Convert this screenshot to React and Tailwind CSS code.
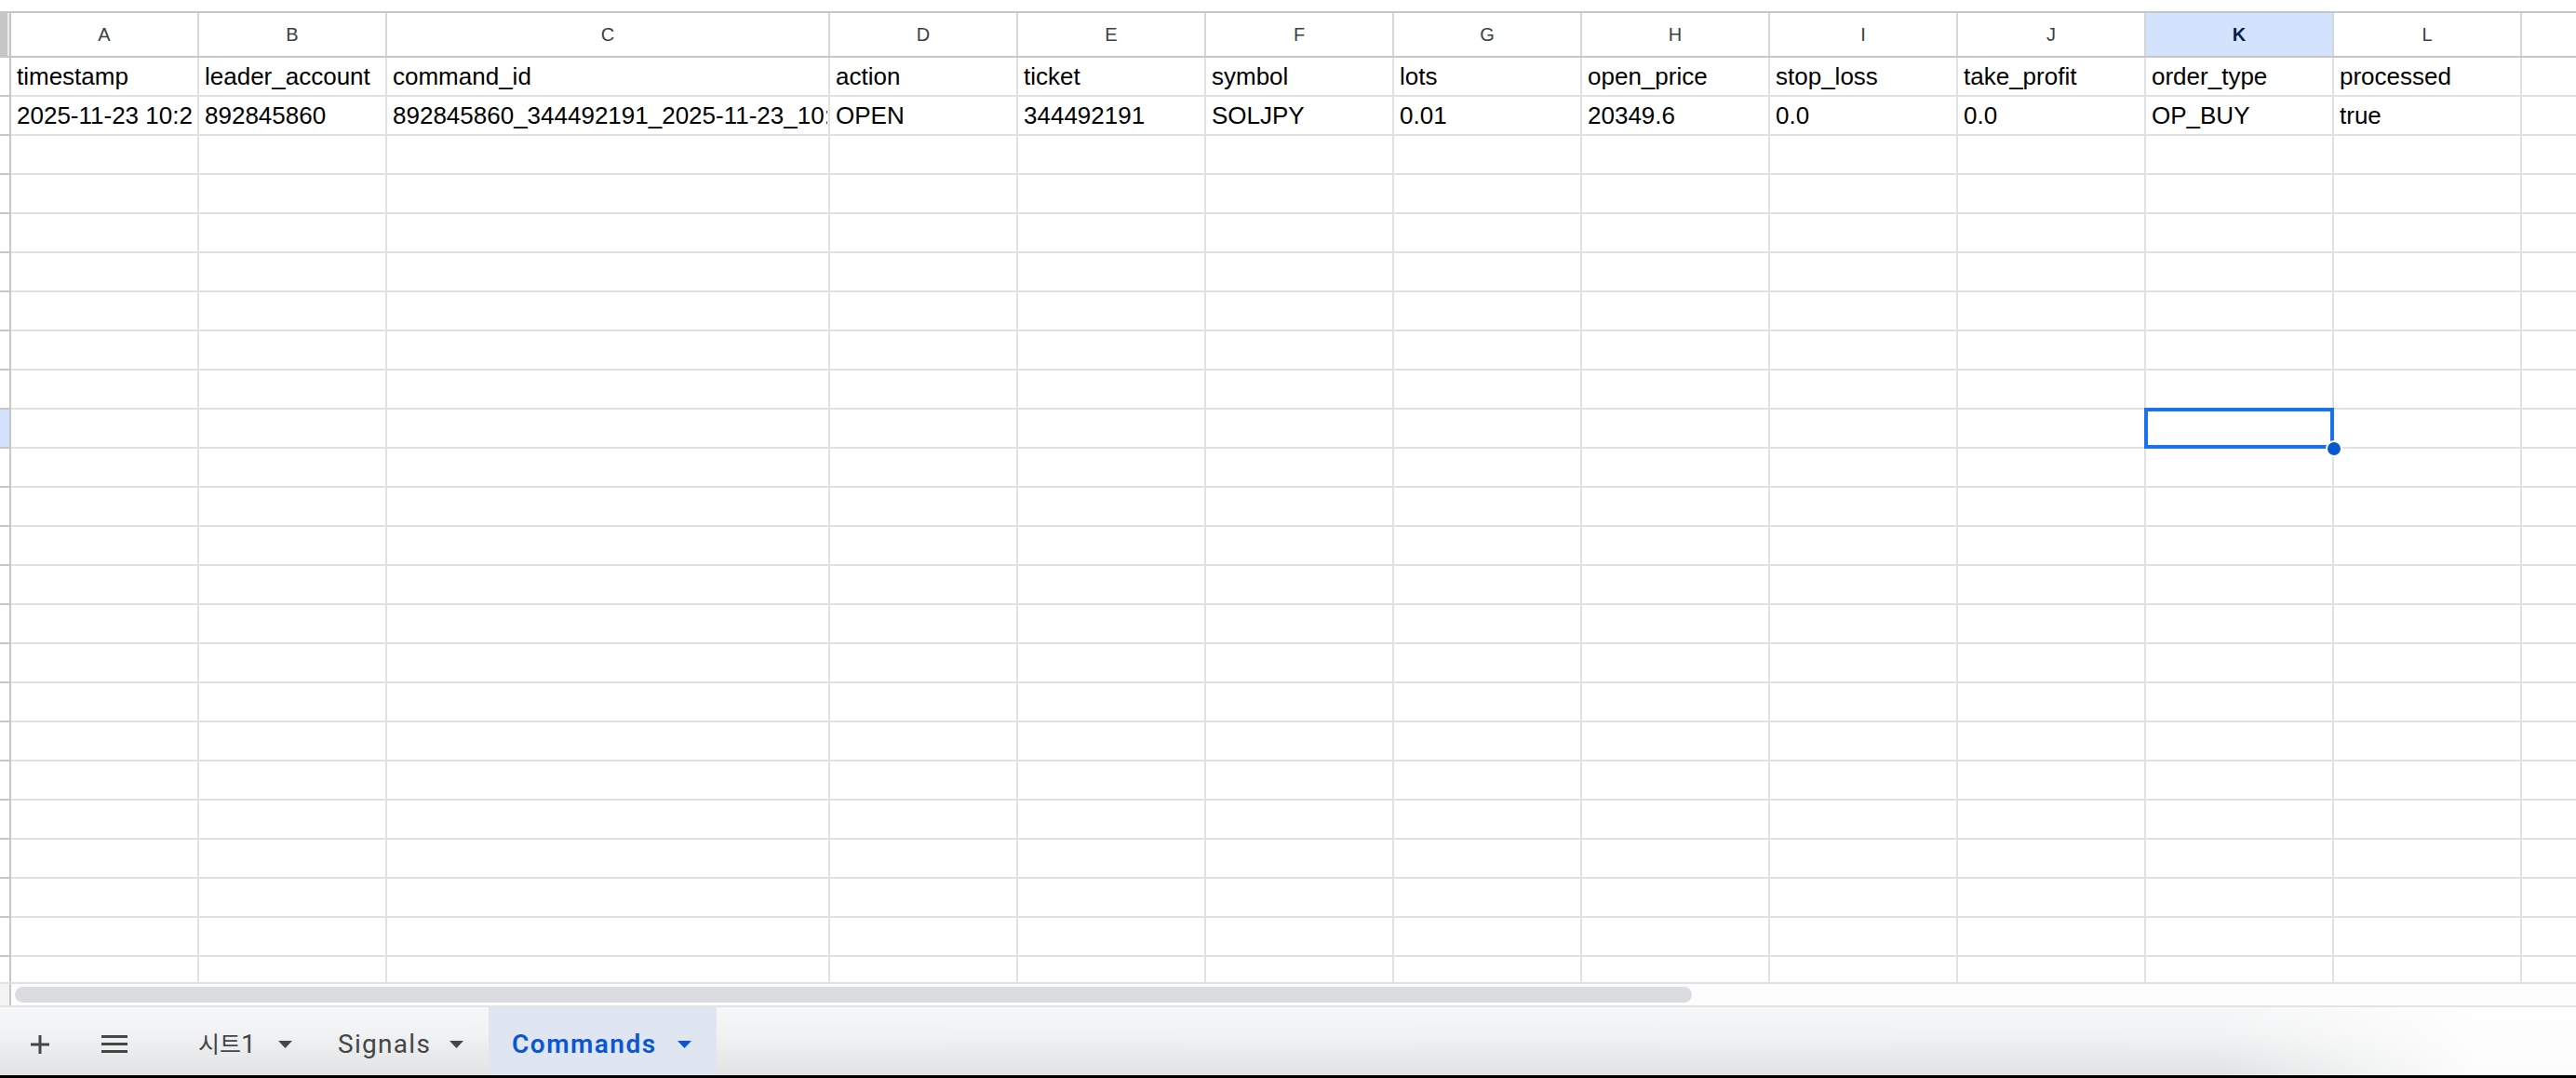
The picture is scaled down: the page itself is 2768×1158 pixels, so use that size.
import React from "react";

const COLS = [
  { k: "A", w: "w-[202px]" },
  { k: "B", w: "w-[202px]" },
  { k: "C", w: "w-[476px]" },
  { k: "D", w: "w-[202px]" },
  { k: "E", w: "w-[202px]" },
  { k: "F", w: "w-[202px]" },
  { k: "G", w: "w-[202px]" },
  { k: "H", w: "w-[202px]" },
  { k: "I", w: "w-[202px]" },
  { k: "J", w: "w-[202px]" },
  { k: "K", w: "w-[202px]" },
  { k: "L", w: "w-[202px]" },
  { k: "M", w: "w-[202px]" },
];

const DATA = [
  [
    "timestamp",
    "leader_account",
    "command_id",
    "action",
    "ticket",
    "symbol",
    "lots",
    "open_price",
    "stop_loss",
    "take_profit",
    "order_type",
    "processed",
    "",
  ],
  [
    "2025-11-23 10:2",
    "892845860",
    "892845860_344492191_2025-11-23_10:24:15",
    "OPEN",
    "344492191",
    "SOLJPY",
    "0.01",
    "20349.6",
    "0.0",
    "0.0",
    "OP_BUY",
    "true",
    "",
  ],
];

const ROW_COUNT = 24;
const SELECTED_ROW = 9; // zero-based (row 10)

function Arrow({ color }) {
  return (
    <svg width="15" height="8" viewBox="0 0 15 8" className="shrink-0">
      <polygon points="0,0 15,0 7.5,8" fill={color} />
    </svg>
  );
}

export default function App() {
  const rows = Array.from({ length: ROW_COUNT }, (_, i) => DATA[i] || []);
  return (
    <div
      className="relative w-[2768px] h-[1158px] overflow-hidden bg-white flex flex-col"
      style={{ fontFamily: '"Liberation Sans", Arial, sans-serif' }}
    >
      {/* top strip */}
      <div className="h-[12px] shrink-0 bg-white" />

      {/* column header row */}
      <div className="flex h-[50px] shrink-0 border-t-2 border-b-2 border-[#c4c7c5]">
        <div className="flex w-[12px] shrink-0 border-r-2 border-[#c4c7c5]">
          <div className="w-[8px] bg-[#c6c6c6]" />
          <div className="w-[2px] bg-[#ececec]" />
        </div>
        {COLS.map((c) => {
          const sel = c.k === "K";
          return (
            <div
              key={c.k}
              className={`${c.w} shrink-0 h-full flex items-center justify-center border-r-2 border-[#d6d6d6] text-[20px] ${
                sel
                  ? "bg-[#d3e3fd] text-[#041e49] font-bold"
                  : "bg-white text-[#3c4043]"
              }`}
            >
              {c.k}
            </div>
          );
        })}
      </div>

      {/* grid body */}
      <div className="h-[995px] shrink-0 overflow-hidden border-b-2 border-[#e1e1e1]">
        {rows.map((r, ri) => (
          <div key={ri} className="flex h-[42px]">
            <div
              className={`w-[12px] shrink-0 h-full border-r-2 border-b-2 border-[#c4c7c5] ${
                ri === SELECTED_ROW ? "bg-[#d3e3fd]" : "bg-white"
              }`}
            />
            {COLS.map((c, ci) => (
              <div
                key={c.k}
                className={`${c.w} shrink-0 h-full border-r-2 border-b-2 border-[#e1e1e1] pl-[6px] pr-[1px]`}
              >
                <div className="overflow-hidden whitespace-nowrap text-[26px] leading-[40px] text-black">
                  {r[ci] || ""}
                </div>
              </div>
            ))}
          </div>
        ))}
      </div>

      {/* horizontal scrollbar */}
      <div className="flex h-[25px] shrink-0 border-b-2 border-[#e3e3e3] bg-[#fdfdfd]">
        <div className="w-[12px] shrink-0 h-full border-r-2 border-[#c4c7c5] bg-[#f3f3f3]" />
        <div className="ml-[4px] mt-[3px] h-[17px] w-[1802px] rounded-full bg-[#dadce0]" />
      </div>

      {/* sheet tab bar */}
      <div
        className="flex h-[73px] shrink-0 items-stretch bg-[linear-gradient(to_right,rgba(255,255,255,0)_86%,rgba(255,255,255,0.9)_96%),linear-gradient(to_bottom,#f6f7f8,#f1f2f3_40%,#e0e2e3)]"
        style={{ fontFamily: 'Roboto, "Noto Sans", sans-serif' }}
      >
        <div className="flex items-center pt-[6px] pl-[33px]">
          <svg width="20" height="20" viewBox="0 0 20 20">
            <path d="M10 0V20M0 10H20" stroke="#444746" strokeWidth="3" />
          </svg>
        </div>
        <div className="flex items-center pt-[6px] ml-[56px]">
          <svg width="28" height="19" viewBox="0 0 28 19">
            <path
              d="M0 1.5H28M0 9.5H28M0 17.5H28"
              stroke="#444746"
              strokeWidth="3"
            />
          </svg>
        </div>
        <div className="ml-[51px] w-[150px] shrink-0 flex items-center pt-[6px] pl-[25px] text-[#444746]">
          <span className="text-[28px] leading-none whitespace-nowrap">
            <span
              className="text-[25px]"
              style={{ fontFamily: '"Noto Sans CJK KR", sans-serif' }}
            >
              시트
            </span>
            1
          </span>
          <span className="ml-[24px]">
            <Arrow color="#444746" />
          </span>
        </div>
        <div className="w-[187px] shrink-0 flex items-center pt-[6px] pl-[25px] text-[#444746]">
          <span className="text-[28px] leading-none tracking-[1.3px] whitespace-nowrap">
            Signals
          </span>
          <span className="ml-[20px]">
            <Arrow color="#444746" />
          </span>
        </div>
        <div className="w-[245px] shrink-0 flex items-center pt-[6px] pl-[25px] bg-[#dfe6f2] text-[#0b57d0]">
          <span className="text-[28px] leading-none font-semibold tracking-[1.5px] whitespace-nowrap">
            Commands
          </span>
          <span className="ml-[22px]">
            <Arrow color="#0b57d0" />
          </span>
        </div>
      </div>

      {/* bottom black edge */}
      <div className="h-[3px] shrink-0 bg-black" />

      {/* selection overlay */}
      <div className="absolute top-[438px] left-[2304px] w-[204px] h-[44px] border-4 border-[#1a73e8]" />
      <div className="absolute top-[473px] left-[2499px] w-[18px] h-[18px] rounded-full bg-[#0b57d0] border-2 border-white" />
    </div>
  );
}
